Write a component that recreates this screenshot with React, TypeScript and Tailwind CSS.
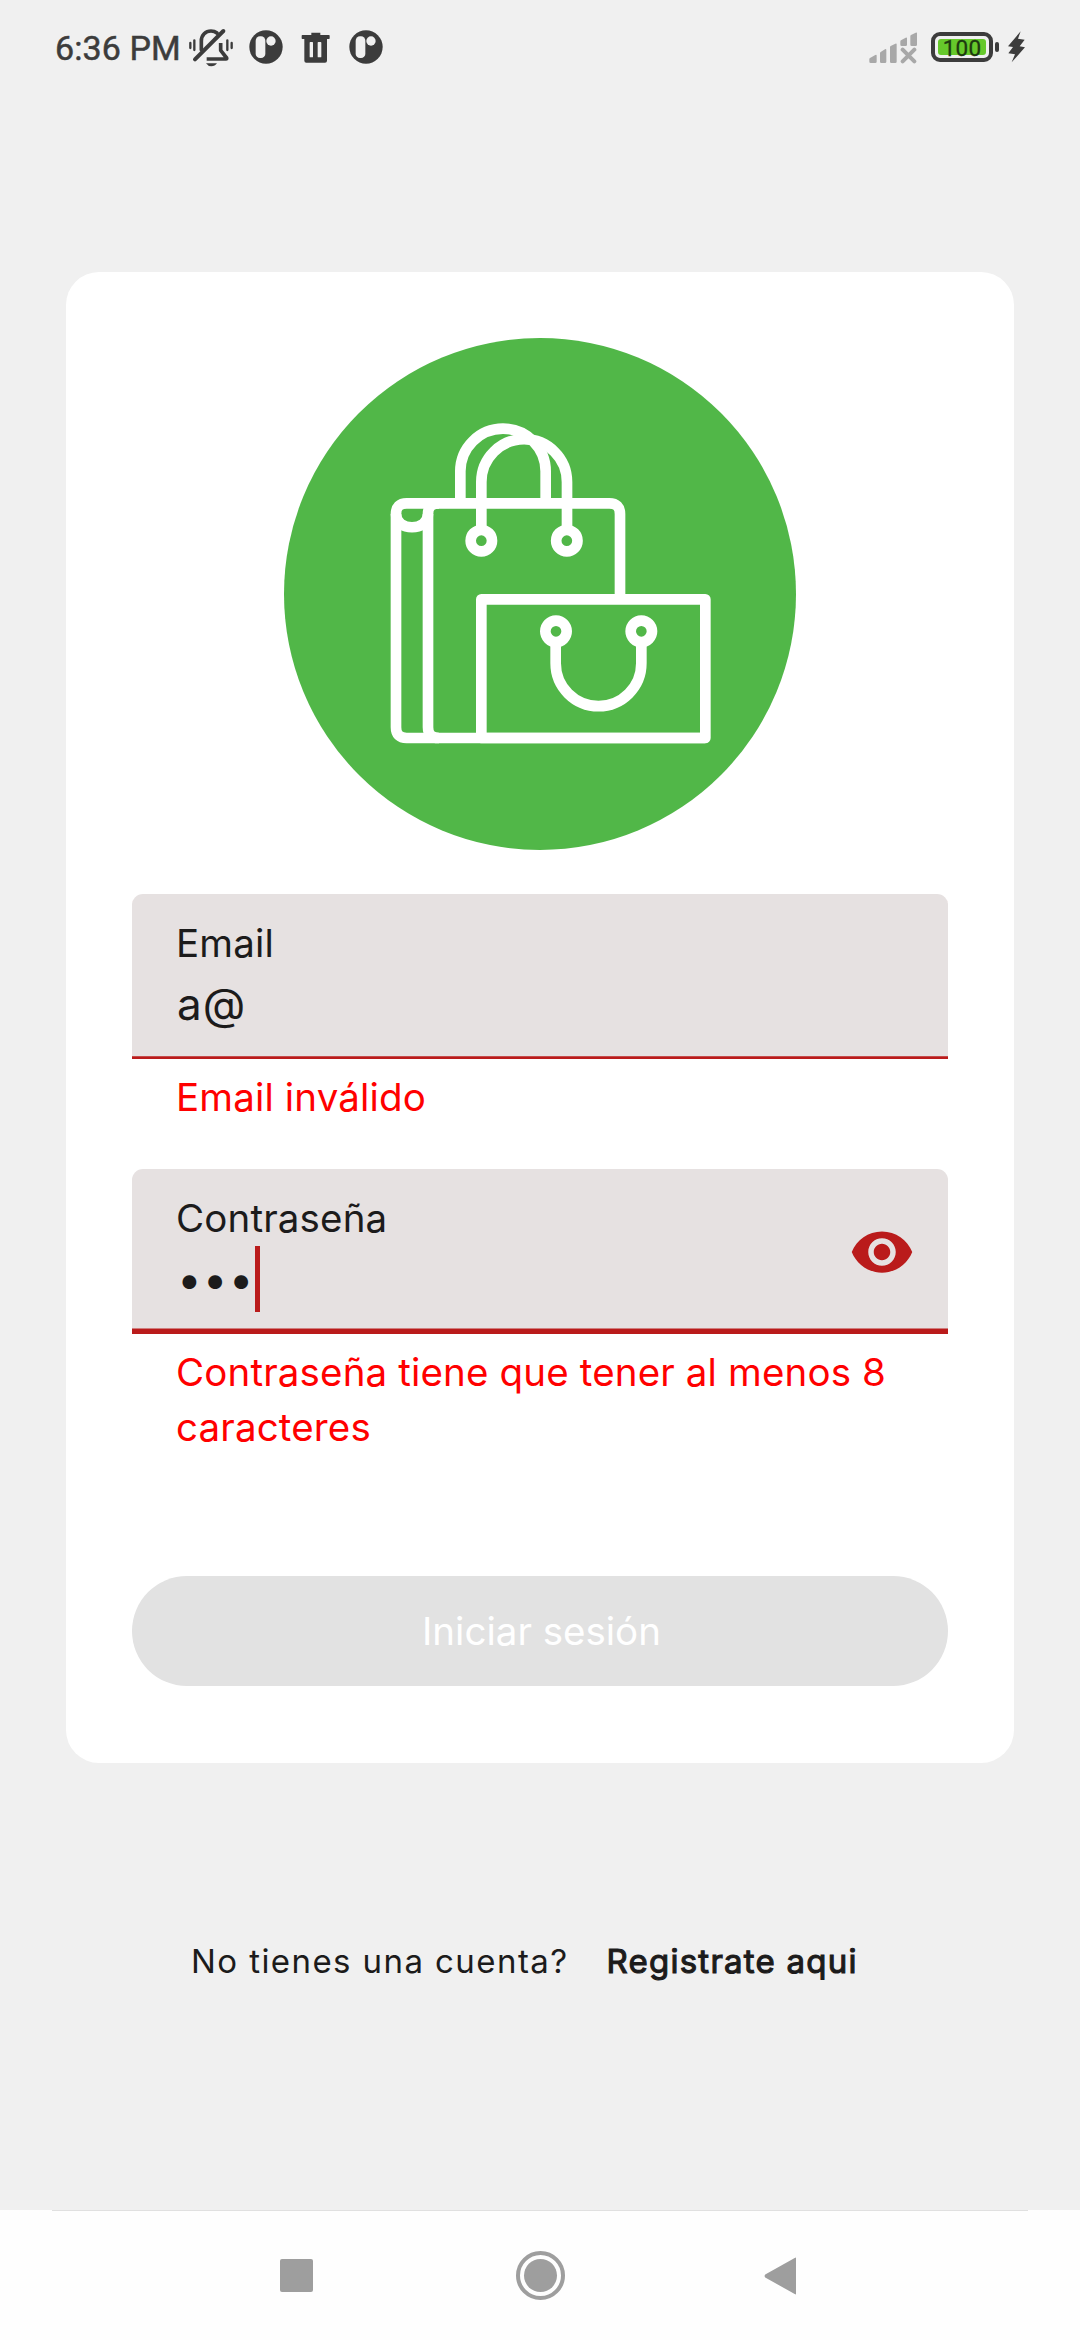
import { useState } from "react";
import type { ReactNode } from "react";

function BellOffIcon() {
  return (
    <svg className="h-[40px] w-[48px]" viewBox="441 36 144 120" fill="none" stroke="#3c3c3c" strokeLinecap="round" strokeLinejoin="round">
      <path d="M484 104V78C484 60 497 48 513 48C520 48 526 50 531 54" strokeWidth="11" />
      <path d="M542 84V106L560 129Q561 132 558 132H500" strokeWidth="11" strokeLinecap="butt" />
      <path d="M465 133L550 48" strokeWidth="12" />
      <path d="M498 145H531Q525 154 514 154Q504 154 498 145Z" fill="#3c3c3c" stroke="none" />
      <path d="M451 84V99M463 76V105M562 76V105M575 84V99" strokeWidth="7" />
    </svg>
  );
}

function AppBadgeIcon() {
  return (
    <svg className="h-[34px] w-[34px]" viewBox="-51 -51 102 102">
      <circle r="50" fill="#3c3c3c" />
      <rect x="-31" y="-32" width="29" height="65" rx="13" fill="#f0f0f0" />
      <circle cx="15" cy="-18" r="14" fill="#f0f0f0" />
    </svg>
  );
}

function TrashIcon() {
  return (
    <svg className="h-[31px] w-[29px]" viewBox="784 50 87 93" fill="#3c3c3c">
      <path d="M815 52H842V59H868Q870 59 870 61V69Q870 71 868 71H862V136Q862 142 856 142H800Q794 142 794 136V71H788Q786 71 786 69V61Q786 59 788 59H815Z" />
      <path d="M810 82Q810 80 812 80H818Q820 80 820 82V124Q820 126 818 126H812Q810 126 810 124ZM834 82Q834 80 836 80H843Q845 80 845 82V124Q845 126 843 126H836Q834 126 834 124Z" fill="#f0f0f0" />
    </svg>
  );
}

function SignalIcon() {
  return (
    <svg className="h-[32px] w-[49px]" viewBox="57 51 147 96" fill="#a8a8a8">
      <path d="M58 132Q58 130 60 129L76 120Q80 118 80 122V140Q80 144 76 144H62Q58 144 58 140Z" />
      <path d="M90 114Q90 112 92 111L105 103Q109 101 109 105V140Q109 144 105 144H94Q90 144 90 140Z" />
      <path d="M120 97Q120 94 122 93L136 86Q140 84 140 88V140Q140 144 136 144H124Q120 144 120 140Z" />
      <path d="M151 80Q151 77 153 76L167 68Q171 66 171 70V89Q171 93 167 93H155Q151 93 151 89Z" />
      <path d="M181 64Q181 61 183 60L197 53Q201 51 201 55V89Q201 93 197 93H185Q181 93 181 89Z" />
      <path d="M158 104L193 139M193 104L158 139" stroke="#a8a8a8" strokeWidth="12" strokeLinecap="round" />
    </svg>
  );
}

function Battery() {
  return (
    <div className="flex items-center gap-[2px]">
      <div className="flex h-[30px] w-[62px] items-center justify-center rounded-[9px] border-4 border-[#3c3c3c] p-[3px]">
        <div className="flex h-[16px] w-full items-center justify-center rounded-[3px] bg-[#66c92b] pt-[2px] font-[Roboto] text-[22.5px] leading-[16px] tracking-[0.2px] text-[#1d3a10] [-webkit-text-stroke:0.3px_#1d3a10]">
          100
        </div>
      </div>
      <div className="h-[10px] w-[4px] rounded-[2px] bg-[#3c3c3c]" />
    </div>
  );
}

function BoltIcon() {
  return (
    <svg className="h-[32px] w-[19px]" viewBox="470 50 57 96" fill="#3c3c3c">
      <path d="M511 51L473 96L488 98L474 117L494 120L484 144L524 99L508 96L523 76L503 73Z" />
    </svg>
  );
}

function StatusBar() {
  return (
    <header className="flex h-[94px] items-center text-[#3c3c3c]">
      <span className="ml-[55px] w-[132px] pt-[2px] font-[Roboto] text-[34px] leading-[40px] tracking-[0.1px] whitespace-nowrap [-webkit-text-stroke:0.5px_#3c3c3c]">
        6:36 PM
      </span>
      <BellOffIcon />
      <span className="ml-[14px]">
        <AppBadgeIcon />
      </span>
      <span className="ml-[18px]">
        <TrashIcon />
      </span>
      <span className="ml-[19px]">
        <AppBadgeIcon />
      </span>
      <span className="mr-[13px] ml-auto pt-[2px]">
        <SignalIcon />
      </span>
      <Battery />
      <span className="mr-[54px] ml-[8px]">
        <BoltIcon />
      </span>
    </header>
  );
}

function ShoppingLogo() {
  return (
    <svg className="h-[512px] w-[512px]" viewBox="-258 -186 1536 1536" fill="none" stroke="#fff" strokeWidth="32">
      <circle cx="510" cy="582" r="768" fill="#51b748" stroke="none" />
      <path d="M271 310V214A128 128 0 0 1 527 214V310" />
      <path d="M334 400V246A128 128 0 0 1 591 246V400" />
      <path d="M750 598V342Q750 310 718 310H110Q78 310 78 342V982Q78 1014 110 1014H1006" />
      <path d="M207 310Q174 310 174 342V982Q174 1014 207 1014" />
      <path d="M78 342C78 395 174 395 174 342" />
      <path d="M334 1014V598H1006V1014Z" strokeLinejoin="round" />
      <path d="M557 720V790A128 128 0 0 0 814 790V720" />
      <circle cx="334" cy="422" r="32" fill="#51b748" />
      <circle cx="590.5" cy="422" r="32" fill="#51b748" />
      <circle cx="558" cy="694" r="32" fill="#51b748" />
      <circle cx="814" cy="694" r="32" fill="#51b748" />
    </svg>
  );
}

function EyeIcon() {
  return (
    <svg className="h-[66px] w-[66px]" viewBox="0 0 24 24" fill="#ba1b1b">
      <path d="M12 4.5C7 4.5 2.73 7.61 1 12c1.73 4.39 6 7.5 11 7.5s9.27-3.11 11-7.5c-1.73-4.39-6-7.5-11-7.5zM12 17c-2.76 0-5-2.24-5-5s2.24-5 5-5 5 2.24 5 5-2.24 5-5 5zm0-8c-1.66 0-3 1.34-3 3s1.34 3 3 3 3-1.34 3-3-1.34-3-3-3z" />
    </svg>
  );
}

type FieldProps = {
  label: string;
  value: string;
  error: string;
  focused?: boolean;
  trailing?: ReactNode;
};

function Field({ label, value, error, focused, trailing }: FieldProps) {
  return (
    <div>
      <div
        className={
          focused
            ? "flex h-[165px] items-center justify-between rounded-t-[11px] bg-[#e6e1e1] pr-[33px] pl-[44px] shadow-[inset_0_-5.5px_0_#ba1b1b]"
            : "flex h-[165px] items-center justify-between rounded-t-[11px] bg-[#e6e1e1] pr-[33px] pl-[44px] shadow-[inset_0_-2.75px_0_#ba1b1b]"
        }
      >
        <div>
          <div className="text-[38.5px] leading-[55px] tracking-[0.15px]">{label}</div>
          <div className="flex h-[66px] items-center pl-[1px] text-[44px] leading-[66px] tracking-[1.1px]">
            {value}
            {focused && <span className="h-[66px] w-[5px] bg-[#ba1b1b]" />}
          </div>
        </div>
        {trailing}
      </div>
      <p className="mt-[11px] pr-[44px] pl-[44px] text-[38.5px] leading-[55px] tracking-[0.15px] text-[#ff0000]">{error}</p>
    </div>
  );
}

function NavigationBar() {
  return (
    <nav className="mt-auto h-[130px] bg-[#fefefe] px-[52px]">
      <div className="h-px bg-[#e0e0e0]" />
      <div className="flex h-[129px] items-center">
        <div className="ml-[228px] h-[33px] w-[33px] rounded-[2px] bg-[#9e9e9e]" />
        <div className="ml-[203px] flex h-[49px] w-[49px] items-center justify-center rounded-full border-4 border-[#9e9e9e]">
          <div className="h-[33px] w-[33px] rounded-full bg-[#9e9e9e]" />
        </div>
        <svg className="ml-[199px] h-[38px] w-[33px]" viewBox="0 0 33 38" fill="#9e9e9e">
          <path d="M32 1.5V36.5Q32 38 30.7 37L1.2 20.5Q0 19 1.2 17.5L30.7 1Q32 0 32 1.5Z" />
        </svg>
      </div>
    </nav>
  );
}

export default function App() {
  const [visible, setVisible] = useState(false);
  return (
    <div className="flex h-[2340px] w-[1080px] flex-col bg-[#f0f0f0] font-[Inter,sans-serif] text-[#1c1b1b]">
      <StatusBar />
      <main className="mx-[66px] mt-[178px] flex h-[1491px] flex-col rounded-[33px] bg-white px-[66px] pt-[66px]">
        <div className="flex justify-center">
          <ShoppingLogo />
        </div>
        <div className="mt-[44px] flex flex-col gap-[44px]">
          <Field label="Email" value="a@" error="Email inválido" />
          <Field
            label="Contraseña"
            value="•••"
            error="Contraseña tiene que tener al menos 8 caracteres"
            focused
            trailing={
              <button type="button" aria-pressed={visible} onClick={() => setVisible(!visible)}>
                <EyeIcon />
              </button>
            }
          />
        </div>
        <button type="button" className="mt-[121px] h-[110px] rounded-full bg-[#e2e2e2] pl-[3px] text-[38.5px] leading-[55px] text-white">
          Iniciar sesión
        </button>
      </main>
      <div className="mt-[176px] flex items-center pl-[191px] text-[33px] leading-[44px] whitespace-nowrap">
        <span className="mr-[5px] tracking-[1.42px]">No tienes una cuenta?</span>
        <button type="button" className="px-[33px] tracking-[1.24px] [-webkit-text-stroke:1.1px_#1c1b1b]">
          Registrate aqui
        </button>
      </div>
      <NavigationBar />
    </div>
  );
}
